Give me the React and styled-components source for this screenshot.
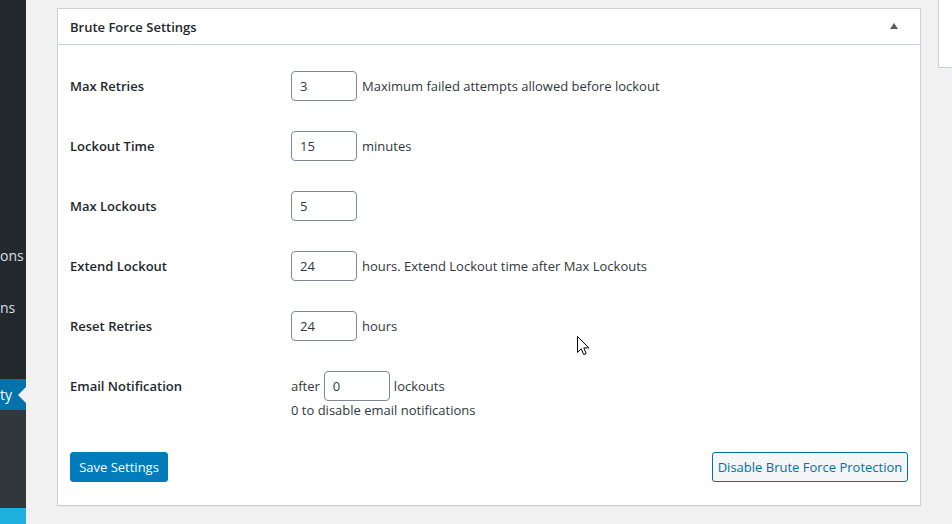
import React from 'react'
import styled, { createGlobalStyle } from 'styled-components'

const GlobalStyle = createGlobalStyle`
  html, body {
    margin: 0;
    padding: 0;
    background: #f1f1f1;
    font-family: "Open Sans", "Noto Sans", sans-serif;
    color: #32373c;
  }
  * {
    box-sizing: border-box;
  }
`

const Layout = styled.div`
  position: relative;
  display: flex;
  width: 952px;
  height: 524px;
  overflow: hidden;
`

const Sidebar = styled.nav`
  width: 26px;
  flex: none;
  display: flex;
  flex-direction: column;
  padding-top: 239px;
  background: #23282d;
  overflow: hidden;
`

const MenuItem = styled.div`
  position: relative;
  flex: none;
  height: ${p => p.$height || 34}px;
  margin-bottom: ${p => p.$gap || 0}px;
  line-height: ${p => p.$height || 34}px;
  white-space: nowrap;
  font-size: 14px;
  color: ${p => (p.$current ? '#fff' : 'rgba(240, 245, 250, 0.9)')};
  background: ${p => (p.$current ? '#0073aa' : 'transparent')};

  ${p => p.$current && `
    &::after {
      content: "";
      position: absolute;
      right: 0;
      top: 50%;
      margin-top: -8px;
      border: 8px solid transparent;
      border-right-color: #f1f1f1;
    }
  `}
`

const Submenu = styled.div`
  height: 98px;
  flex: none;
  background: #32373c;
`

const Highlight = styled.div`
  flex: 1;
  background: #1eb1df;
`

const Main = styled.main`
  flex: 1;
  display: flex;
  align-items: flex-start;
  gap: 17px;
  padding-left: 31px;
`

const Postbox = styled.section`
  width: 864px;
  flex: none;
  margin-top: 8px;
  background: #fff;
  border: 1px solid #ccd0d4;
  box-shadow: 0 1px 1px rgba(0, 0, 0, 0.04);
`

const PostboxHeader = styled.header`
  display: flex;
  align-items: center;
  justify-content: space-between;
  height: 36px;
  padding: 0 8px 0 12px;
  border-bottom: 1px solid #ccd0d4;
`

const Title = styled.h2`
  margin: 0;
  font-size: 13px;
  font-weight: 600;
  color: #23282d;
`

const Toggle = styled.button`
  width: 36px;
  height: 35px;
  padding: 0;
  border: 0;
  background: transparent;
  display: flex;
  align-items: center;
  justify-content: center;

  &::before {
    content: "";
    border: 4px solid transparent;
    border-bottom: 6px solid #555d66;
    border-top: 0;
    margin-top: -1px;
  }
`

const Inside = styled.div`
  padding: 12px 12px 23px 12px;
`

const Row = styled.div`
  display: grid;
  grid-template-columns: 221px 1fr;
  align-items: start;
  min-height: 60px;
  padding-top: 14px;
`

const Label = styled.label`
  font-size: 13px;
  font-weight: 600;
  line-height: 31px;
  color: #23282d;
`

const Field = styled.div`
  display: flex;
  flex-direction: column;
  font-size: 13px;
`

const FieldLine = styled.div`
  display: flex;
  align-items: center;
  gap: ${p => p.$gap || 5}px;
  line-height: 30px;
`

const Description = styled.div`
  line-height: 18px;
`

const NumberInput = styled.input`
  width: 66px;
  height: 30px;
  margin: 0;
  padding: 0 8px;
  border: 1px solid #7e8993;
  border-radius: 4px;
  font-family: inherit;
  font-size: 13px;
  color: #32373c;
  background: #fff;
`

const Footer = styled.div`
  display: flex;
  align-items: center;
  justify-content: space-between;
  margin-top: 33px;
`

const Button = styled.button`
  width: ${p => p.$width}px;
  height: 30px;
  padding: 0;
  border-radius: 3px;
  font-family: inherit;
  font-size: 13px;
  line-height: 28px;
  white-space: nowrap;
  text-align: center;
  border: 1px solid ${p => (p.$primary ? '#007cba' : '#0071a1')};
  background: ${p => (p.$primary ? '#007cba' : '#f3f5f6')};
  color: ${p => (p.$primary ? '#fff' : '#0071a1')};
`

const SidePanel = styled.aside`
  width: 40px;
  height: 68px;
  flex: none;
  background: #fff;
  border: 1px solid #ccd0d4;
  border-top: 0;
`

const Cursor = styled.svg`
  position: absolute;
  left: 577px;
  top: 336px;
`

const rows = [
  { label: 'Max Retries', value: '3', after: 'Maximum failed attempts allowed before lockout' },
  { label: 'Lockout Time', value: '15', after: 'minutes' },
  { label: 'Max Lockouts', value: '5' },
  { label: 'Extend Lockout', value: '24', after: 'hours. Extend Lockout time after Max Lockouts' },
  { label: 'Reset Retries', value: '24', after: 'hours' },
]

export default function App() {
  return (
    <Layout>
      <GlobalStyle />
      <Sidebar>
        <MenuItem $gap={18}>ons</MenuItem>
        <MenuItem $gap={18}>ns</MenuItem>
        <MenuItem $height={36} />
        <MenuItem $current $height={31}>ty</MenuItem>
        <Submenu />
        <Highlight />
      </Sidebar>
      <Main>
        <Postbox>
          <PostboxHeader>
            <Title>Brute Force Settings</Title>
            <Toggle aria-label="Toggle panel" />
          </PostboxHeader>
          <Inside>
            {rows.map(r => (
              <Row key={r.label}>
                <Label>{r.label}</Label>
                <Field>
                  <FieldLine>
                    <NumberInput defaultValue={r.value} />
                    {r.after && <span>{r.after}</span>}
                  </FieldLine>
                </Field>
              </Row>
            ))}
            <Row>
              <Label>Email Notification</Label>
              <Field>
                <FieldLine $gap={4}>
                  <span>after</span>
                  <NumberInput defaultValue="0" />
                  <span>lockouts</span>
                </FieldLine>
                <Description>0 to disable email notifications</Description>
              </Field>
            </Row>
            <Footer>
              <Button $primary $width={98}>Save Settings</Button>
              <Button $width={196}>Disable Brute Force Protection</Button>
            </Footer>
          </Inside>
        </Postbox>
        <SidePanel />
      </Main>
      <Cursor width="13" height="20" viewBox="0 0 13 20">
        <path d="M0.5 0.5 L0.5 16.5 L4.2 12.8 L6.7 18.6 L9.2 17.5 L6.8 11.9 L11.8 11.9 Z" fill="#fff" stroke="#000" strokeWidth="1" />
      </Cursor>
    </Layout>
  )
}
